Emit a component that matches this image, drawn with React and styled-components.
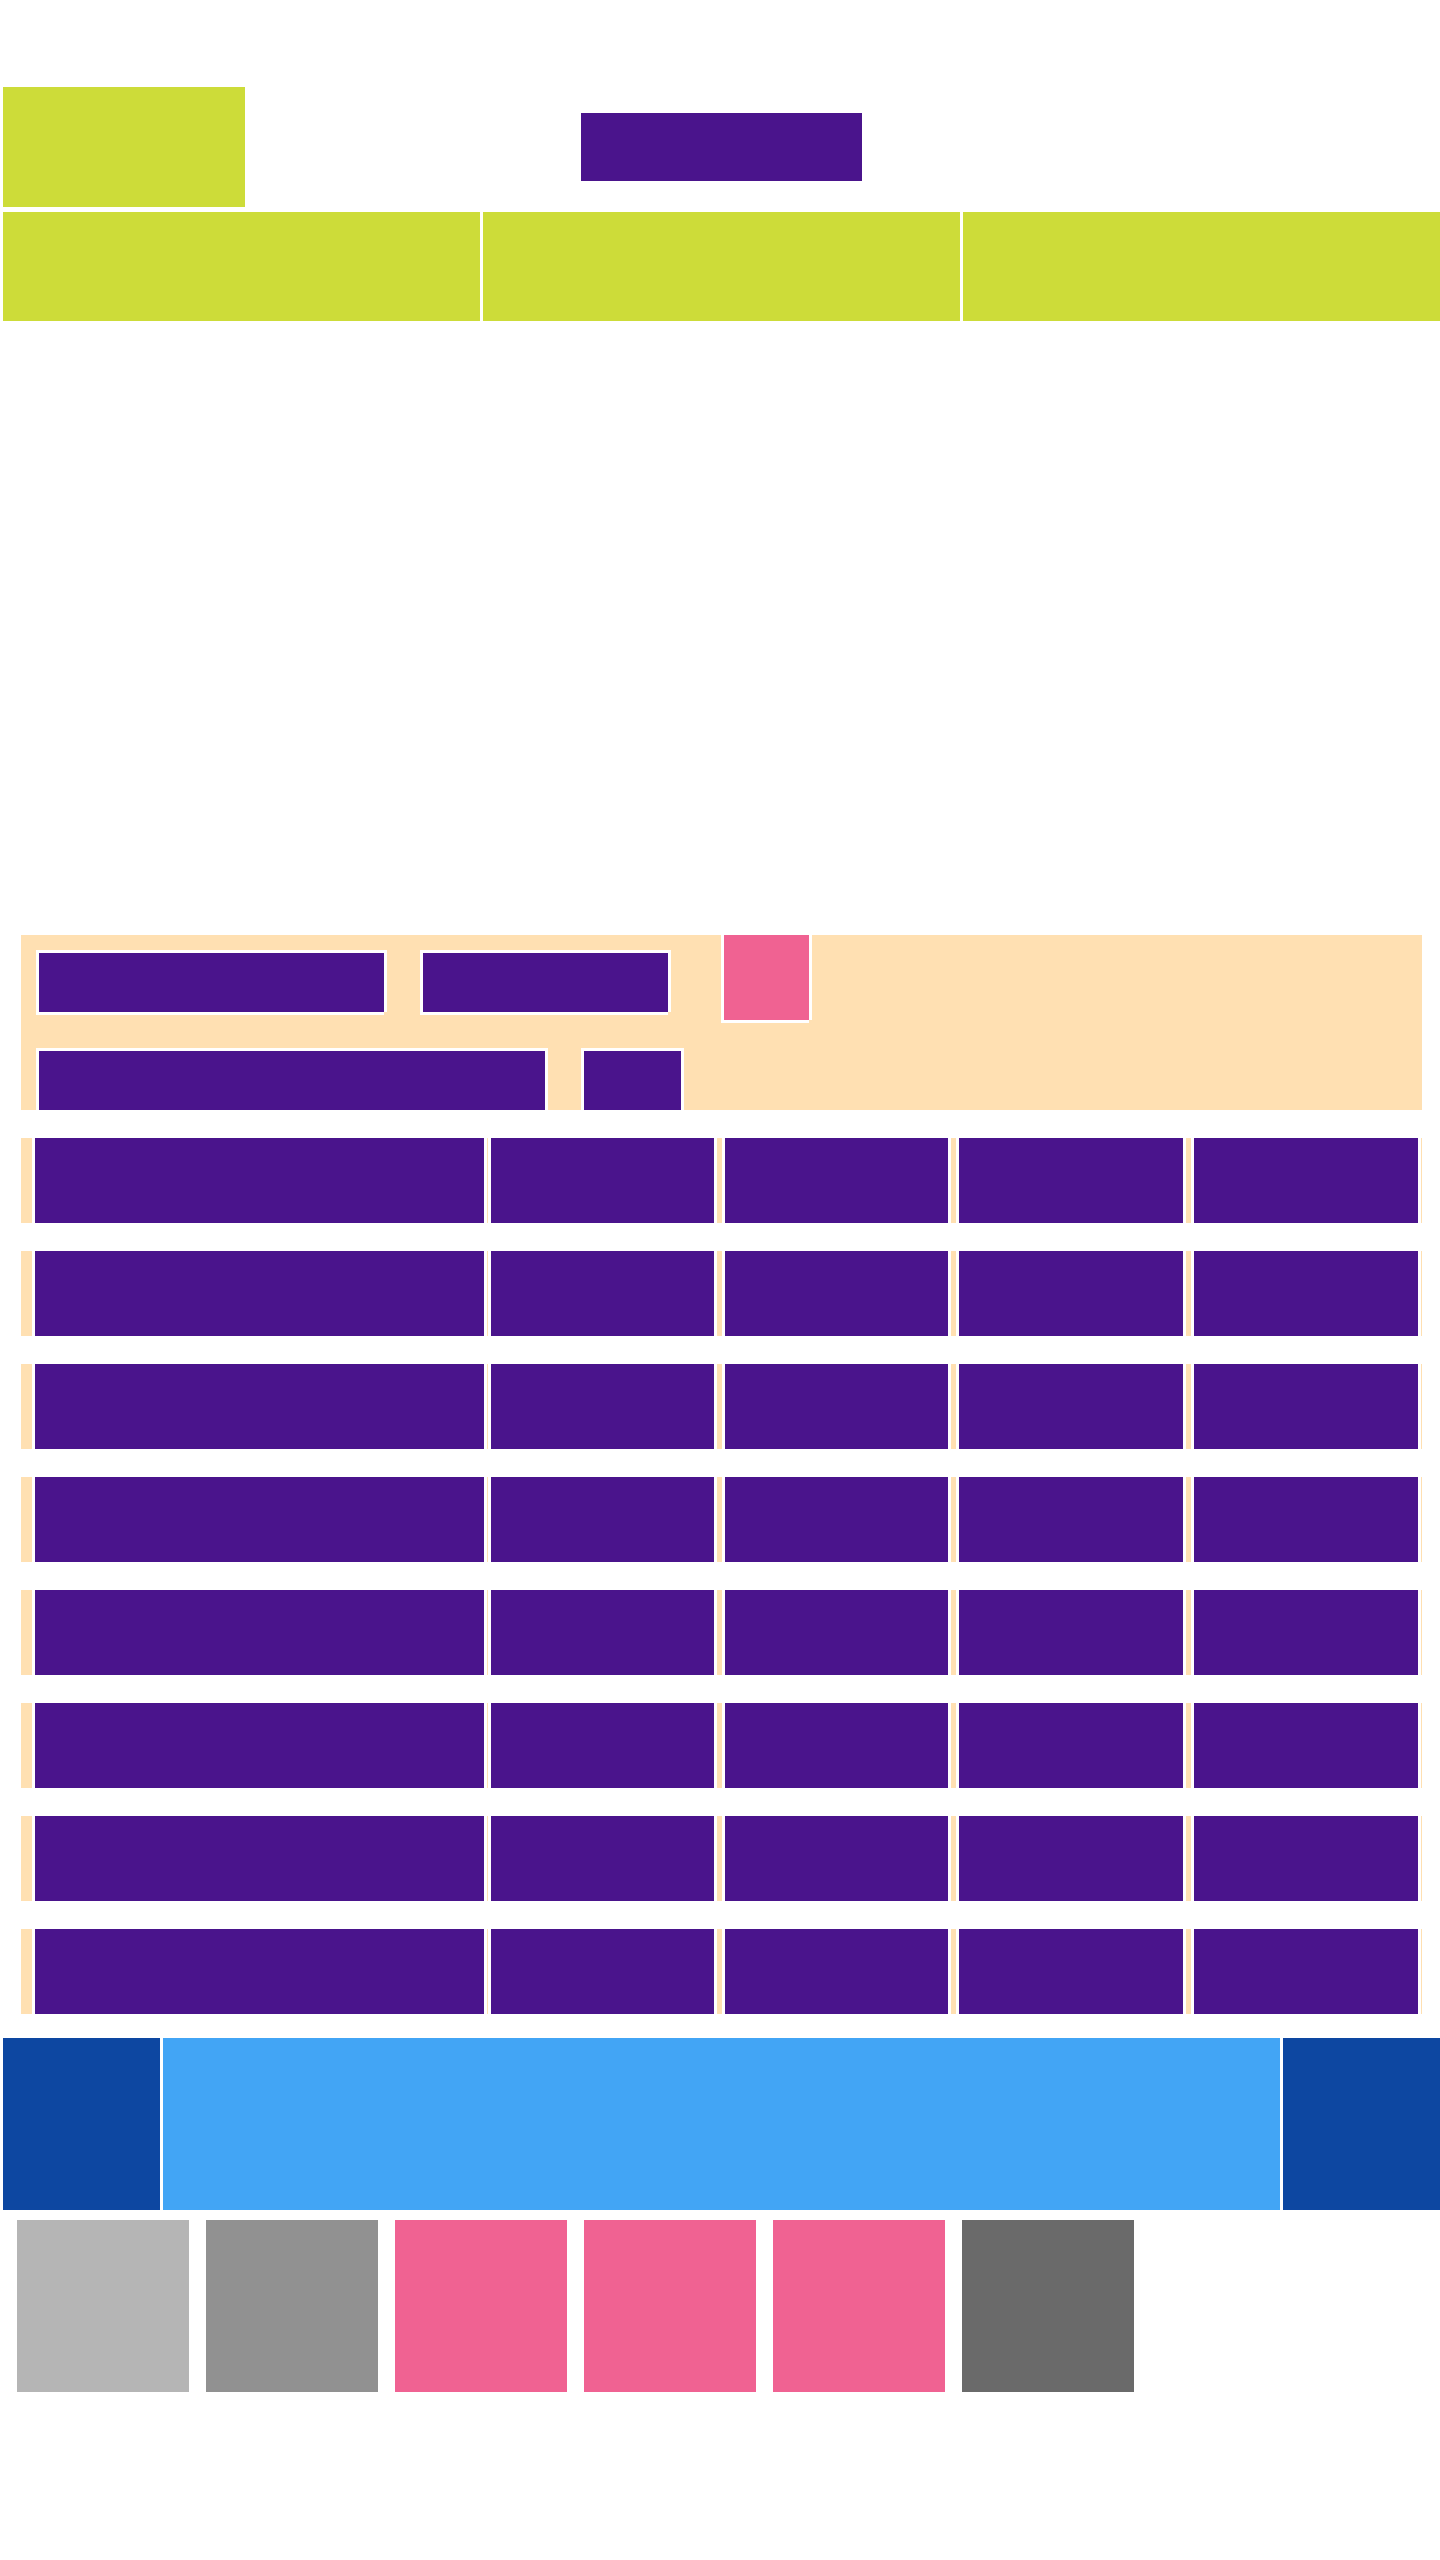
import React from "react";
import styled, { createGlobalStyle } from "styled-components";

const color = {
  lime: "#cddc39",
  purple: "#4a148c",
  pink: "#f06292",
  cream: "#ffe0b2",
  navy: "#0d47a1",
  sky: "#42a5f5",
  white: "#ffffff",
};

const GlobalStyle = createGlobalStyle`
  *, *::before, *::after {
    box-sizing: border-box;
  }

  body {
    margin: 0;
    background: ${color.white};
    font-family: "Liberation Sans", sans-serif;
  }
`;

const Page = styled.div`
  display: flex;
  flex-direction: column;
  min-height: 100vh;
  padding-top: 87px;
`;

const Header = styled.header`
  display: grid;
  grid-template-columns: 1fr auto 1fr;
  align-items: center;
  padding-left: 3px;
`;

const Logo = styled.div`
  width: 242px;
  height: 120px;
  background: ${color.lime};
`;

const Title = styled.div`
  width: 281px;
  height: 68px;
  background: ${color.purple};
`;

const Nav = styled.nav`
  display: grid;
  grid-template-columns: repeat(3, 1fr);
  gap: 3px;
  margin-top: 5px;
  padding-left: 3px;
`;

const NavItem = styled.div`
  height: 109px;
  background: ${color.lime};
`;

const Hero = styled.section`
  height: 614px;
`;

const Content = styled.main`
  display: flex;
  flex-direction: column;
  gap: 28px;
  padding: 0 18px 0 21px;
`;

const Filters = styled.section`
  display: flex;
  flex-direction: column;
  gap: 13px;
  padding: 0 18px;
  overflow: hidden;
  background: ${color.cream};
`;

const FilterRow = styled.div`
  display: flex;
  align-items: flex-start;
  gap: 39px;
`;

/* White edge on all four sides, left open at the bottom right corner. */
const Outlined = styled.div`
  flex: none;
  box-shadow:
    -3px -3px ${color.white},
    3px -3px ${color.white},
    3px 0 ${color.white},
    -3px 3px ${color.white},
    0 3px ${color.white};
`;

const Chip = styled(Outlined)`
  width: ${({ $width }) => $width}px;
  height: 59px;
  margin-top: 18px;
  background: ${color.purple};
`;

const Thumb = styled(Outlined)`
  width: 85px;
  height: 85px;
  margin-left: 17px;
  background: ${color.pink};
`;

const Row = styled.div`
  display: grid;
  grid-template-columns: 455fr 933fr;
  gap: 1px;
  height: 85px;
  padding: 0 1px 0 11px;
  background: ${color.cream};
`;

const Cell = styled.div`
  border: solid ${color.white};
  border-width: 0 3px;
  background: ${color.purple};
`;

const CellGroup = styled.div`
  display: grid;
  grid-template-columns: 229fr 229fr 230fr 230fr;
  gap: 5px;
`;

const Carousel = styled.section`
  display: grid;
  grid-template-columns: 157px 1fr 157px;
  gap: 3px;
  height: 172px;
  margin-top: 24px;
  padding-left: 3px;
`;

const CarouselEnd = styled.div`
  background: ${color.navy};
`;

const CarouselTrack = styled.div`
  background: ${color.sky};
`;

const Tiles = styled.footer`
  display: flex;
  flex-wrap: wrap;
  gap: 17px;
  margin-top: 10px;
  padding: 0 17px;
`;

const Tile = styled.div`
  width: 172px;
  height: 172px;
  background: ${({ $tone }) => $tone};
`;

const rows = Array.from({ length: 8 }, (_, i) => i);
const columns = Array.from({ length: 4 }, (_, i) => i);
const tiles = ["#b5b5b5", "#919191", color.pink, color.pink, color.pink, "#6a6a6a"];

export default function App() {
  return (
    <>
      <GlobalStyle />
      <Page>
        <Header>
          <Logo />
          <Title />
        </Header>
        <Nav>
          <NavItem />
          <NavItem />
          <NavItem />
        </Nav>
        <Hero />
        <Content>
          <Filters>
            <FilterRow>
              <Chip $width={345} />
              <Chip $width={245} />
              <Thumb />
            </FilterRow>
            <FilterRow>
              <Chip $width={506} />
              <Chip $width={97} />
            </FilterRow>
          </Filters>
          {rows.map((row) => (
            <Row key={row}>
              <Cell />
              <CellGroup>
                {columns.map((column) => (
                  <Cell key={column} />
                ))}
              </CellGroup>
            </Row>
          ))}
        </Content>
        <Carousel>
          <CarouselEnd />
          <CarouselTrack />
          <CarouselEnd />
        </Carousel>
        <Tiles>
          {tiles.map((tone, i) => (
            <Tile key={i} $tone={tone} />
          ))}
        </Tiles>
      </Page>
    </>
  );
}
